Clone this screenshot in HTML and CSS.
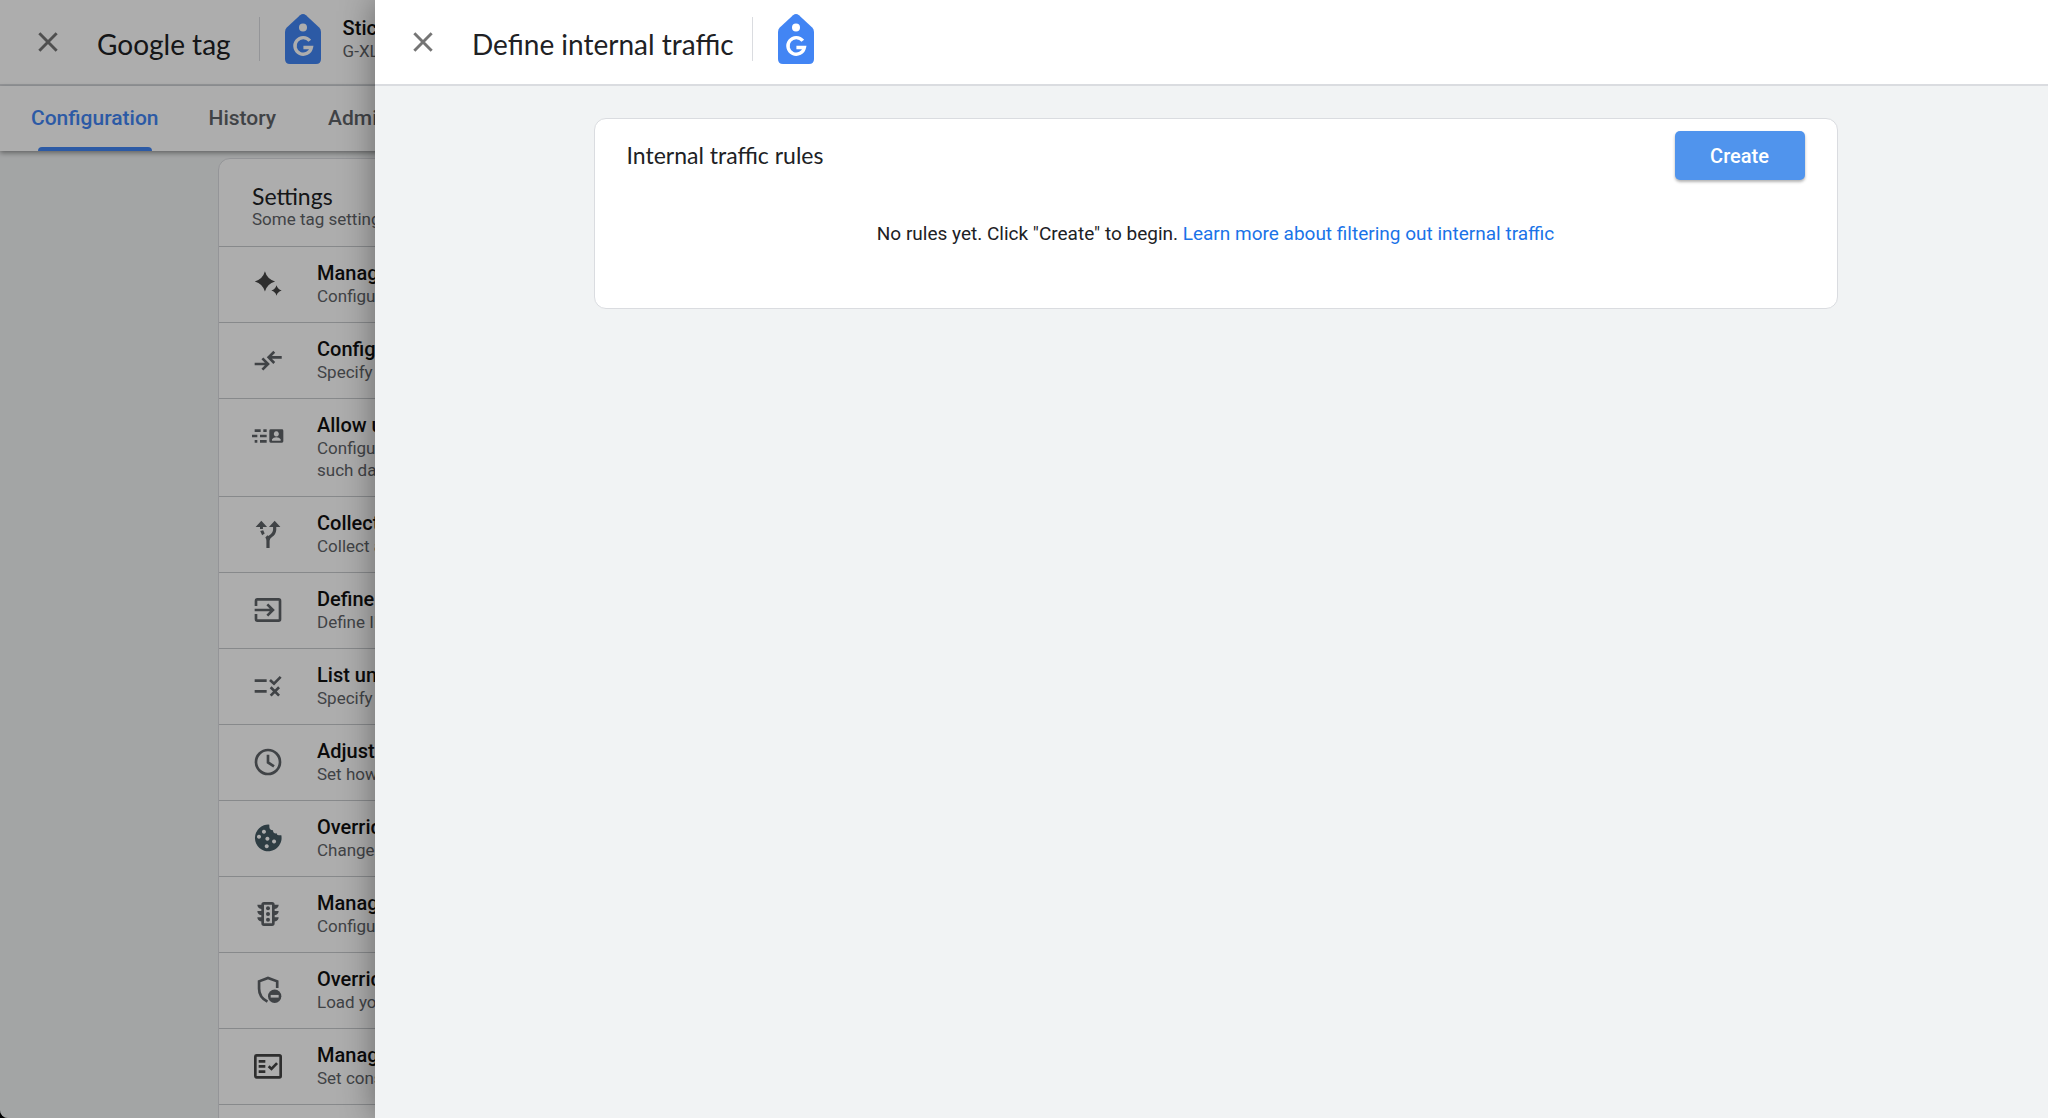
FILE: index.html
```html
<!DOCTYPE html>
<html lang="en">
<head>
    <meta charset="UTF-8">
    <meta name="viewport" content="width=device-width, initial-scale=1.0">
    <title>Define internal traffic</title>
    <link rel="stylesheet" href="styles.css">
</head>
<body>
    <!-- Shared icons -->
    <svg class="sprite" aria-hidden="true">
        <symbol id="tag" viewBox="0 0 36 50">
            <path fill="#4285f4" d="M15 1.3Q18-1.3 21 1.3L34.2 13.6Q36 15.3 36 18V45Q36 50 31 50H5Q0 50 0 45V18Q0 15.3 1.8 13.6Z"/>
            <circle cx="18" cy="13.5" r="4" fill="#fff"/>
            <path fill="none" stroke="#fff" stroke-width="3.4" d="M24.8 26.8A8.3 8.3 0 1 0 26.4 33.5H18.4"/>
        </symbol>
        <symbol id="close" viewBox="0 0 24 24">
            <path fill="none" stroke="currentColor" stroke-width="2.2" d="M5.5 5.5L18.5 18.5M18.5 5.5L5.5 18.5"/>
        </symbol>
    </svg>

    <div class="app">
        <div class="page">
            <header class="topbar">
                <button class="close-btn" aria-label="Close"><svg><use href="#close"/></svg></button>
                <h1 class="topbar-title">Google tag</h1>
                <span class="topbar-divider"></span>
                <svg class="tag-icon"><use href="#tag"/></svg>
                <div class="tag-info">
                    <div class="tag-name">Sticker Shop</div>
                    <div class="tag-id">G-XL</div>
                </div>
            </header>
            <nav class="tabs">
                <a class="tab active" href="#">Configuration</a>
                <a class="tab" href="#">History</a>
                <a class="tab" href="#">Admin</a>
            </nav>

            <section class="settings">
                <div class="settings-header">
                    <h2 class="settings-title">Settings</h2>
                    <p class="item-desc">Some tag settings apply to all destinations</p>
                </div>

                <a class="item" href="#">
                    <svg class="item-icon dark" viewBox="0 0 24 24"><path d="M9.7 2.5Q11.3 8.400 17.300 10.100Q11.300 11.800 9.700 17.700Q8.100 11.800 2.100 10.100Q8.100 8.400 9.700 2.500Z"/><path d="M18.400 13Q19.200 16 22.300 16.900Q19.200 17.800 18.400 20.800Q17.600 17.800 14.500 16.900Q17.600 16 18.400 13Z"/></svg>
                    <div>
                        <h3 class="item-title">Manage automatic event detection</h3>
                        <p class="item-desc">Configure which types of events should be measured</p>
                    </div>
                </a>

                <a class="item" href="#">
                    <svg class="item-icon line" viewBox="0 0 24 24"><path d="M2 15H12M7.800 10.800L12 15L7.800 19.200M22.300 10H12.500M16.700 5.800L12.500 10L16.700 14.200"/></svg>
                    <div>
                        <h3 class="item-title">Configure your domains</h3>
                        <p class="item-desc">Specify a list of domains for cross-domain measurement</p>
                    </div>
                </a>

                <a class="item" href="#">
                    <svg class="item-icon" viewBox="0 0 24 24"><path d="M2 7H6.500V9H2ZM8.500 7H11V9H8.500ZM0 11H4V13H0ZM6 11H11V13H6ZM2 15H4V17H2ZM6 15H11V17H6Z"/><path fill-rule="evenodd" d="M14 7H22.500Q23.500 7 23.500 8V16Q23.500 17 22.500 17H14Q13 17 13 16V8Q13 7 14 7ZM18.200 8.500A1.900 1.900 0 1 0 18.300 8.500ZM15 15.500H21.500V14.500Q20.500 13 18.200 13Q16 13 15 14.500Z"/></svg>
                    <div>
                        <h3 class="item-title">Allow user-provided data capabilities</h3>
                        <p class="item-desc">Configure your Google tag to include user-provided data from your website<br>such data is used to improve measurement</p>
                    </div>
                </a>

                <a class="item" href="#">
                    <svg class="item-icon" viewBox="0 0 24 24"><path d="M7 2L11.300 6.800H8.200V8.200H6V6.800H2.700ZM17 2L21.300 6.800H18.200V9Q17.800 12.700 15 14.300Q13.200 15.500 13.200 17V22.500H10.800V17Q10.800 15.500 10 14.600L11.600 13L12.200 13.500L13 12.900Q15.800 11.200 15.800 8.500V6.800H12.700Z"/><path d="M6.200 9.700L8.400 9.200L9.500 11.600L7.600 12.900Z"/></svg>
                    <div>
                        <h3 class="item-title">Collect Universal Analytics events</h3>
                        <p class="item-desc">Collect an event each time a custom event is called</p>
                    </div>
                </a>

                <a class="item" href="#">
                    <svg class="item-icon line" viewBox="0 0 24 24"><path d="M3 9V5Q3 4 4 4H20Q21 4 21 5V19Q21 20 20 20H4Q3 20 3 19V15M2 12H15.500M11.500 7.800L15.700 12L11.500 16.200"/></svg>
                    <div>
                        <h3 class="item-title">Define internal traffic</h3>
                        <p class="item-desc">Define IP addresses whose traffic should be marked as internal</p>
                    </div>
                </a>

                <a class="item" href="#">
                    <svg class="item-icon line" viewBox="0 0 24 24"><path d="M2 8H11M2 16H11M13.500 7.500L16.500 10.300L21.500 5.200M14 12.900L20.300 19.200M20.300 12.900L14 19.200"/></svg>
                    <div>
                        <h3 class="item-title">List unwanted referrals</h3>
                        <p class="item-desc">Specify domains whose traffic should not be considered referrals</p>
                    </div>
                </a>

                <a class="item" href="#">
                    <svg class="item-icon line" viewBox="0 0 24 24"><circle cx="12" cy="12" r="9"/><path d="M12 6.500V12.300L16.500 15.200"/></svg>
                    <div>
                        <h3 class="item-title">Adjust session timeout</h3>
                        <p class="item-desc">Set how long sessions can last</p>
                    </div>
                </a>

                <a class="item" href="#">
                    <svg class="item-icon cookie" viewBox="0 0 24 24"><path fill-rule="evenodd" d="M13 2A10 10 0 1 0 22 10H20Q18.500 10 18.500 8.500Q16 9 15.700 6.200Q13 6 13 3.500ZM9 5.800A1.500 1.500 0 1 1 8.900 5.800ZM5.300 9.600A1.500 1.500 0 1 1 5.200 9.600ZM11.600 11.100A1.500 1.500 0 1 1 11.500 11.100ZM16.600 13.100A1.500 1.500 0 1 1 16.500 13.100ZM11.100 16.700A1.500 1.500 0 1 1 11 16.700Z"/></svg>
                    <div>
                        <h3 class="item-title">Override cookie settings</h3>
                        <p class="item-desc">Change how long cookies last and how they are updated</p>
                    </div>
                </a>

                <a class="item" href="#">
                    <svg class="item-icon" viewBox="0 0 24 24"><path fill-rule="evenodd" d="M9 3H15Q17 3 17 5H20Q20 7.500 17 8.200V9.700H20Q20 12.200 17 12.900V14.400H20Q20 17 17 17.700V19Q17 21 15 21H9Q7 21 7 19V17.700Q4 17 4 14.400H7V12.900Q4 12.200 4 9.700H7V8.200Q4 7.500 4 5H7Q7 3 9 3ZM9 5V19H15V5Z"/><circle cx="12" cy="7.700" r="1.500"/><circle cx="12" cy="12" r="1.500"/><circle cx="12" cy="16.400" r="1.500"/></svg>
                    <div>
                        <h3 class="item-title">Manage data use across Google services</h3>
                        <p class="item-desc">Configure the consented data sent to Google services</p>
                    </div>
                </a>

                <a class="item" href="#">
                    <svg class="item-icon line" viewBox="0 0 24 24"><path d="M11.600 20.700Q5.300 17.500 5.300 11V5.500L12 3L18.900 5.500V10.500"/><circle class="solid" cx="17" cy="16.700" r="5"/><path class="cut" d="M14 16.700H20"/></svg>
                    <div>
                        <h3 class="item-title">Override Google tag source</h3>
                        <p class="item-desc">Load your Google tag from a custom path</p>
                    </div>
                </a>

                <a class="item" href="#">
                    <svg class="item-icon dark line" viewBox="0 0 24 24"><rect x="2.500" y="4" width="19" height="16.500" rx="1"/><path d="M5 8.500H10M5 12.300H10M5 16.200H10M12.500 12.200L14.600 14.200L18.800 9.800"/></svg>
                    <div>
                        <h3 class="item-title">Manage consent settings</h3>
                        <p class="item-desc">Set consent defaults for this tag</p>
                    </div>
                </a>

                <a class="item" href="#"></a>
            </section>
        </div>

        <div class="scrim"></div>

        <main class="drawer">
            <header class="topbar">
                <button class="close-btn" aria-label="Close"><svg><use href="#close"/></svg></button>
                <h1 class="topbar-title">Define internal traffic</h1>
                <span class="topbar-divider"></span>
                <svg class="tag-icon"><use href="#tag"/></svg>
            </header>
            <div class="drawer-body">
                <section class="rules">
                    <div class="rules-header">
                        <h2 class="rules-title">Internal traffic rules</h2>
                        <button class="create-btn">Create</button>
                    </div>
                    <p class="rules-empty">No rules yet. Click "Create" to begin. <a href="#">Learn more about filtering out internal traffic</a></p>
                </section>
            </div>
        </main>
    </div>
</body>
</html>
```
FILE: styles.css
```css
* {
    margin: 0;
    padding: 0;
    box-sizing: border-box;
}

html {
    background: #000;
}

body {
    font-family: Roboto, sans-serif;
    color: #202124;
}

a {
    color: #1a73e8;
    text-decoration: none;
}

.sprite {
    position: absolute;
    width: 0;
    height: 0;
}

.app {
    position: relative;
    height: 100vh;
    overflow: hidden;
    background: #f1f3f4;
    border-bottom-left-radius: 8px;
}

/* Top bar */
.topbar {
    display: flex;
    align-items: center;
    height: 86px;
    padding: 0 32px 6px;
    background: #fff;
    border-bottom: 2px solid #dadce0;
}

.close-btn {
    width: 32px;
    height: 32px;
    margin: 6px 33px 0 0;
    border: none;
    background: none;
    color: #757575;
    cursor: pointer;
}

.close-btn svg {
    display: block;
    width: 32px;
    height: 32px;
}

.topbar-title {
    padding-top: 10px;
    font-family: "Google Sans", Lato, sans-serif;
    font-size: 28px;
    line-height: 32px;
    font-weight: 400;
}

.topbar-divider {
    width: 1px;
    height: 44px;
    margin: 0 25px 0 28px;
    background: #dadce0;
}

.tag-icon {
    width: 36px;
    height: 50px;
    margin-right: 22px;
}

.tag-name {
    font-size: 20px;
    line-height: 24px;
    font-weight: 500;
    color: #111;
}

.tag-id {
    font-size: 17px;
    line-height: 22px;
    color: #5f6368;
}

/* Tabs */
.tabs {
    position: relative;
    display: flex;
    height: 65px;
    padding-left: 6px;
    background: #fff;
    box-shadow: 0 2px 5px rgba(0, 0, 0, 0.4);
}

.tab {
    position: relative;
    min-width: 115px;
    padding: 0 25px;
    font-family: "Google Sans", Roboto, sans-serif;
    font-size: 21px;
    line-height: 64px;
    font-weight: 500;
    text-align: center;
    color: #5f6368;
}

.tab.active {
    color: #4285f4;
}

.tab.active::after {
    content: "";
    position: absolute;
    left: 32px;
    right: 32px;
    bottom: 0;
    height: 4px;
    border-radius: 4px 4px 0 0;
    background: #4285f4;
}

/* Settings list */
.settings {
    max-width: 1612px;
    margin: 7px auto 0;
    background: #fff;
    border: 1px solid #dadce0;
    border-radius: 12px;
}

.settings-header {
    padding: 25px 33px 16px;
}

.settings-title {
    font-family: "Google Sans", Lato, sans-serif;
    font-size: 23px;
    line-height: 24px;
    font-weight: 400;
}

.item {
    display: flex;
    gap: 33px;
    min-height: 76px;
    padding: 14px 33px 15px;
    border-top: 1px solid #c8cacd;
    color: #111;
}

.item-icon {
    flex: none;
    width: 32px;
    height: 32px;
    margin-top: 7px;
    fill: #5f6368;
}

.item-icon.dark {
    fill: #444;
}

.item-icon.cookie {
    fill: #455a64;
}

.item-icon.line {
    fill: none;
    stroke: #5f6368;
    stroke-width: 2;
}

.item-icon.dark.line {
    stroke: #444;
}

.item-icon .solid {
    fill: #5f6368;
    stroke: none;
}

.item-icon .cut {
    stroke: #fff;
}

.item-title {
    font-size: 20px;
    line-height: 24px;
    font-weight: 500;
}

.item-desc {
    font-size: 17px;
    line-height: 22px;
    color: #5f6368;
}

/* Drawer */
.scrim {
    position: absolute;
    inset: 0;
    background: rgba(0, 0, 0, 0.32);
}

.drawer {
    position: absolute;
    inset: 0 0 0 375px;
    background: #f1f3f4;
    box-shadow: 0 0 32px rgba(0, 0, 0, 0.4);
}

.drawer .topbar-divider {
    margin-left: 18px;
}

.drawer-body {
    padding: 32px 0 0 8px;
}

.rules {
    max-width: 1244px;
    margin: 0 auto;
    padding: 12px 32px 62px;
    background: #fff;
    border: 1px solid #dadce0;
    border-radius: 12px;
}

.rules-header {
    display: flex;
    justify-content: space-between;
    align-items: center;
}

.rules-title {
    padding-bottom: 2px;
    font-family: "Google Sans", Lato, sans-serif;
    font-size: 23px;
    line-height: 24px;
    font-weight: 400;
}

.create-btn {
    width: 130px;
    height: 49px;
    border: none;
    border-radius: 5px;
    background: #5094ed;
    box-shadow: 0 2px 3px rgba(0, 0, 0, 0.3);
    color: #fff;
    font-family: "Google Sans", Roboto, sans-serif;
    font-size: 20px;
    font-weight: 500;
    cursor: pointer;
}

.rules-empty {
    margin-top: 42px;
    font-size: 19px;
    line-height: 24px;
    text-align: center;
}
```
